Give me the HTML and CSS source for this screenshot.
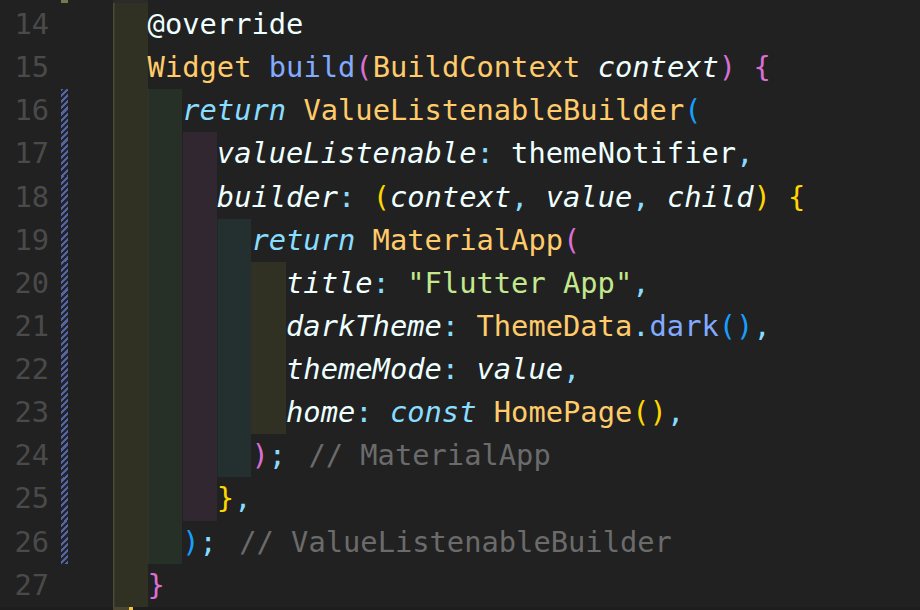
FILE: index.html
```html
<!DOCTYPE html>
<html>
<head>
<meta charset="utf-8">
<link rel="stylesheet" href="styles.css">
</head>
<body>
<div class="editor">
  <div class="line top"><span class="ln"></span><span class="gut add"></span><span class="sp"></span><span class="ind prev"></span></div>
  <div class="line"><span class="ln">14</span><span class="gut"></span><span class="sp"></span><span class="ind y g0"></span><span class="code"><span class="t">@override</span></span></div>
  <div class="line"><span class="ln">15</span><span class="gut"></span><span class="sp"></span><span class="ind y g0"></span><span class="code"><span class="c">Widget</span> <span class="f">build</span><span class="o">(</span><span class="c">BuildContext</span> <span class="t i">context</span><span class="o">)</span> <span class="o">{</span></span></div>
  <div class="line"><span class="ln">16</span><span class="gut mod"></span><span class="sp"></span><span class="ind y g0"></span><span class="ind g"></span><span class="code"><span class="k i">return</span> <span class="c">ValueListenableBuilder</span><span class="b">(</span></span></div>
  <div class="line"><span class="ln">17</span><span class="gut mod"></span><span class="sp"></span><span class="ind y g0"></span><span class="ind g"></span><span class="ind p"></span><span class="code"><span class="t i">valueListenable</span><span class="k">:</span> <span class="t">themeNotifier</span><span class="k">,</span></span></div>
  <div class="line"><span class="ln">18</span><span class="gut mod"></span><span class="sp"></span><span class="ind y g0"></span><span class="ind g"></span><span class="ind p"></span><span class="code"><span class="t i">builder</span><span class="k">:</span> <span class="gd">(</span><span class="t i">context</span><span class="k">,</span> <span class="t i">value</span><span class="k">,</span> <span class="t i">child</span><span class="gd">)</span> <span class="gd">{</span></span></div>
  <div class="line"><span class="ln">19</span><span class="gut mod"></span><span class="sp"></span><span class="ind y g0"></span><span class="ind g"></span><span class="ind p"></span><span class="ind cy"></span><span class="code"><span class="k i">return</span> <span class="c">MaterialApp</span><span class="o">(</span></span></div>
  <div class="line"><span class="ln">20</span><span class="gut mod"></span><span class="sp"></span><span class="ind y g0"></span><span class="ind g"></span><span class="ind p"></span><span class="ind cy"></span><span class="ind y"></span><span class="code"><span class="t i">title</span><span class="k">:</span> <span class="s">"Flutter App"</span><span class="k">,</span></span></div>
  <div class="line"><span class="ln">21</span><span class="gut mod"></span><span class="sp"></span><span class="ind y g0"></span><span class="ind g"></span><span class="ind p"></span><span class="ind cy"></span><span class="ind y"></span><span class="code"><span class="t i">darkTheme</span><span class="k">:</span> <span class="c">ThemeData</span><span class="k">.</span><span class="f">dark</span><span class="b">()</span><span class="k">,</span></span></div>
  <div class="line"><span class="ln">22</span><span class="gut mod"></span><span class="sp"></span><span class="ind y g0"></span><span class="ind g"></span><span class="ind p"></span><span class="ind cy"></span><span class="ind y"></span><span class="code"><span class="t i">themeMode</span><span class="k">:</span> <span class="t i">value</span><span class="k">,</span></span></div>
  <div class="line"><span class="ln">23</span><span class="gut mod"></span><span class="sp"></span><span class="ind y g0"></span><span class="ind g"></span><span class="ind p"></span><span class="ind cy"></span><span class="ind y"></span><span class="code"><span class="t i">home</span><span class="k">:</span> <span class="k i">const</span> <span class="c">HomePage</span><span class="gd">()</span><span class="k">,</span></span></div>
  <div class="line"><span class="ln">24</span><span class="gut mod"></span><span class="sp"></span><span class="ind y g0"></span><span class="ind g"></span><span class="ind p"></span><span class="ind cy"></span><span class="code"><span class="o">)</span><span class="k">;</span> <span class="cm">// MaterialApp</span></span></div>
  <div class="line"><span class="ln">25</span><span class="gut mod"></span><span class="sp"></span><span class="ind y g0"></span><span class="ind g"></span><span class="ind p"></span><span class="code"><span class="gd">}</span><span class="k">,</span></span></div>
  <div class="line"><span class="ln">26</span><span class="gut mod"></span><span class="sp"></span><span class="ind y g0"></span><span class="ind g"></span><span class="code"><span class="b">)</span><span class="k">;</span> <span class="cm">// ValueListenableBuilder</span></span></div>
  <div class="line"><span class="ln">27</span><span class="gut"></span><span class="sp"></span><span class="ind y g0"></span><span class="code"><span class="o">}</span></span></div>
  <div class="line bottom"><span class="ln"></span><span class="gut"></span><span class="sp"></span><span class="bt-a"></span><span class="bt-b"></span></div>
</div>
</body>
</html>
```

FILE: styles.css
```css
html, body {
  margin: 0;
  padding: 0;
  background: #212121;
  width: 920px;
  height: 610px;
  overflow: hidden;
}

.editor {
  display: flex;
  flex-direction: column;
  height: 610px;
  font-family: "DejaVu Sans Mono", "Liberation Mono", monospace;
  font-size: 28.75px;
  color: #eeffff;
}

.line {
  display: flex;
  height: 43.125px;
  flex: none;
}

.line.top {
  height: 3px;
}

.line.bottom {
  flex: 1;
  height: auto;
  background: #1d1d1d;
}

.ln {
  width: 49px;
  text-align: right;
  color: #4a4a4a;
  line-height: 43.125px;
  flex: none;
}

.gut {
  width: 7px;
  margin-left: 12px;
  flex: none;
}

.gut.mod {
  background: repeating-linear-gradient(135deg, #5565a2 0 2.2px, #23242c 2.2px 4.4px);
  background-attachment: fixed;
}

.gut.add {
  background: #6f7d4c;
}

.sp {
  width: 45px;
  flex: none;
}

.ind {
  width: 2ch;
  flex: none;
}

.ind.prev {
  background: #2b2b2b;
}

.ind.y { background: rgba(255, 255, 64, 0.075); }
.ind.g { background: rgba(127, 255, 127, 0.07); box-shadow: inset 1px 0 0 rgba(255, 255, 255, 0.03); }
.ind.p { background: rgba(255, 127, 255, 0.07); box-shadow: inset 1px 0 0 rgba(0, 0, 0, 0.2); }
.ind.cy { background: rgba(79, 236, 236, 0.07); box-shadow: inset 1px 0 0 rgba(0, 0, 0, 0.15); }
.ind.g0 { box-shadow: inset 1.5px 0 0 rgba(255, 255, 200, 0.13); }

.bt-a {
  width: 16px;
  background: #4a4530;
}

.bt-b {
  width: 4px;
  background: #f2c33f;
}

.code {
  white-space: pre;
  line-height: 43.125px;
}

.t { color: #eeffff; }
.i { font-style: italic; }
.c { color: #ffcb6b; }
.f { color: #82aaff; }
.k { color: #89ddff; }
.s { color: #c3e88d; }
.o { color: #da70d6; }
.gd { color: #ffd700; }
.b { color: #179fff; }
.cm { color: #6b6b6b; margin-left: 5px; }
```
